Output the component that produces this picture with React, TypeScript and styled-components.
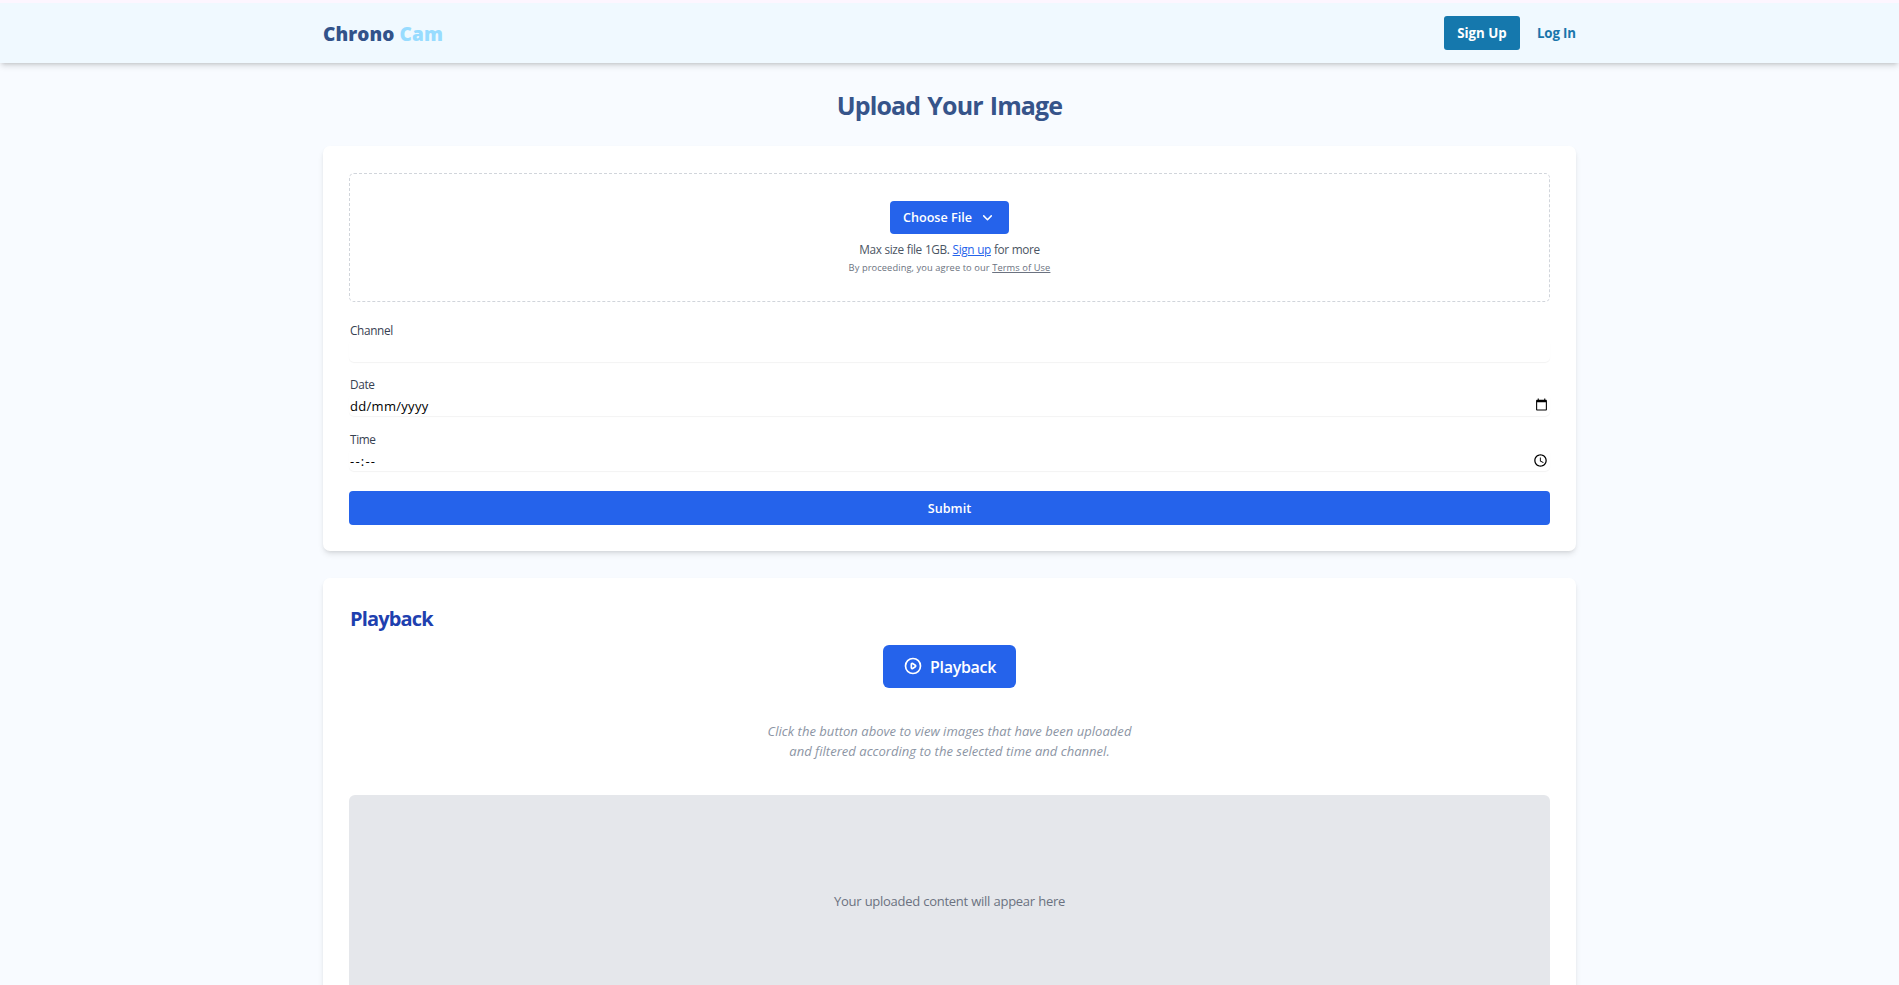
import React from "react";
import styled, { createGlobalStyle } from "styled-components";

const GlobalStyle = createGlobalStyle`
  * { box-sizing: border-box; }
  html, body { margin: 0; padding: 0; }
  body {
    height: 100vh;
    overflow: hidden;
    background: #f8fbff;
    font-family: "Open Sans", "Noto Sans", sans-serif;
  }
  button { font-family: inherit; border: 0; margin: 0; padding: 0; cursor: pointer; }
  p, h1, h2 { margin: 0; }
  a { color: inherit; }
`;

const Header = styled.header`
  position: relative;
  height: 63px;
  border-top: 3px solid #fdf6ff;
  background: #f0f9ff;
  box-shadow: 0 4px 6px -1px rgba(0, 0, 0, 0.13), 0 2px 4px -2px rgba(0, 0, 0, 0.16);
`;

const HeaderInner = styled.div`
  width: 1253px;
  height: 60px;
  margin: 0 auto;
  display: flex;
  align-items: center;
  justify-content: space-between;
`;

const Logo = styled.div`
  font-size: 19px;
  font-weight: 800;
  line-height: 28px;
  letter-spacing: 0.1px;
  padding-top: 2px;
  white-space: nowrap;
  color: #32538a;
`;

const LogoAccent = styled.span`
  color: #98dcff;
`;

const Nav = styled.nav`
  display: flex;
  align-items: center;
  gap: 17px;
  padding-bottom: 1px;
  white-space: nowrap;
`;

const SignUpButton = styled.button`
  width: 76px;
  height: 34px;
  border-radius: 3px;
  background: #1578ad;
  color: #fff;
  font-size: 13.3px;
  font-weight: 700;
`;

const LogInLink = styled.span`
  width: 39px;
  color: #1a76ab;
  font-size: 13.3px;
  font-weight: 700;
  letter-spacing: -0.15px;
`;

const Main = styled.main`
  width: 1253px;
  margin: 0 auto;
  padding-top: 24px;
`;

const Title = styled.h1`
  margin-bottom: 23px;
  color: #36548a;
  font-size: 25px;
  font-weight: 700;
  line-height: 36px;
  letter-spacing: -0.9px;
  word-spacing: 1.6px;
  text-align: center;
`;

const Card = styled.section`
  margin-bottom: 27px;
  padding: 26px;
  border-radius: 7px;
  background: #fff;
  box-shadow: 0 4px 6px -1px rgba(0, 0, 0, 0.1), 0 2px 4px -2px rgba(0, 0, 0, 0.12);
`;

const DropZone = styled.div`
  height: 129px;
  margin-top: 1px;
  padding-top: 27px;
  display: flex;
  flex-direction: column;
  align-items: center;
  border: 1px dashed #d1d5db;
  border-radius: 5px;
`;

const ChooseButton = styled.button`
  width: 119px;
  height: 33px;
  padding-right: 2px;
  display: flex;
  align-items: center;
  justify-content: center;
  gap: 9px;
  border-radius: 4px;
  background: #2563eb;
  color: #fff;
  font-size: 12.6px;
  font-weight: 600;
`;

const SizeHint = styled.p`
  margin-top: 6px;
  color: #4b5563;
  font-size: 11.8px;
  line-height: 18px;
  letter-spacing: -0.38px;
  word-spacing: 0.4px;
  white-space: nowrap;
  a { color: #2563eb; }
`;

const TermsHint = styled.p`
  margin-top: 2px;
  color: #6b7280;
  font-size: 9.3px;
  line-height: 16px;
  letter-spacing: 0.09px;
  white-space: nowrap;
`;

const Field = styled.div<{ $gap: number }>`
  margin-top: ${(p) => p.$gap}px;
`;

const Label = styled.div`
  padding-left: 1px;
  color: #374151;
  font-size: 11.8px;
  font-weight: 500;
  line-height: 18px;
  letter-spacing: -0.35px;
`;

const Input = styled.div<{ $tracking?: number }>`
  height: 23px;
  padding: 2px 2px 0 1px;
  display: flex;
  align-items: center;
  justify-content: space-between;
  border-radius: 5px;
  box-shadow: 0 1px 1px rgba(0, 0, 0, 0.05);
  color: #000;
  font-size: 13px;
  line-height: 20px;
  letter-spacing: ${(p) => p.$tracking ?? 0}px;
`;

const SubmitButton = styled.button`
  display: block;
  width: 100%;
  height: 34px;
  margin-top: 20px;
  border-radius: 4px;
  background: #2563eb;
  color: #fff;
  font-size: 12.6px;
  font-weight: 600;
`;

const SectionTitle = styled.h2`
  padding: 1px 0 0 1px;
  color: #1e40af;
  font-size: 20px;
  font-weight: 700;
  line-height: 28px;
  letter-spacing: -0.85px;
`;

const PlaybackButton = styled.button`
  width: 133px;
  height: 43px;
  margin: 12px auto 0;
  display: flex;
  align-items: center;
  justify-content: center;
  gap: 7px;
  border-radius: 6px;
  background: #2563eb;
  color: #fff;
  font-size: 16px;
  font-weight: 600;
  letter-spacing: -0.3px;
  svg { margin-bottom: 1px; }
`;

const Description = styled.p`
  margin-top: 33px;
  color: #8c95a4;
  font-size: 13px;
  font-style: italic;
  line-height: 20px;
  letter-spacing: 0.03px;
  text-align: center;
`;

const Preview = styled.div`
  height: 212px;
  margin-top: 34px;
  display: flex;
  align-items: center;
  justify-content: center;
  border-radius: 6px;
  background: #e5e7eb;
  color: #6b7280;
  font-size: 13px;
  line-height: 20px;
  letter-spacing: -0.29px;
  word-spacing: 0.4px;
`;

const ChevronIcon = () => (
  <svg width="13" height="13" viewBox="0 0 24 24" fill="none" stroke="currentColor" strokeWidth="2.8" strokeLinecap="round" strokeLinejoin="round">
    <path d="M19 9l-7 7-7-7" />
  </svg>
);

const PlayIcon = () => (
  <svg width="20" height="20" viewBox="0 0 24 24" fill="none" stroke="currentColor" strokeWidth="2" strokeLinecap="round" strokeLinejoin="round">
    <path d="M14.752 11.168l-3.197-2.132A1 1 0 0010 9.87v4.263a1 1 0 001.555.832l3.197-2.132a1 1 0 000-1.664z" />
    <path d="M21 12a9 9 0 11-18 0 9 9 0 0118 0z" />
  </svg>
);

const CalendarSvg = styled.svg`
  margin-bottom: 2px;
`;

const ClockSvg = styled.svg`
  margin-right: 0.5px;
`;

const CalendarIcon = () => (
  <CalendarSvg width="13" height="13" viewBox="0 0 24 24">
    <path d="M20 3h-1V1h-2v2H7V1H5v2H4c-1.1 0-2 .9-2 2v16c0 1.1.9 2 2 2h16c1.1 0 2-.9 2-2V5c0-1.1-.9-2-2-2zm0 18H4V8h16v13z" />
  </CalendarSvg>
);

const ClockIcon = () => (
  <ClockSvg width="15" height="15" viewBox="0 0 24 24">
    <path d="M11.99 2C6.47 2 2 6.48 2 12s4.47 10 9.99 10C17.52 22 22 17.52 22 12S17.52 2 11.99 2zM12 20c-4.42 0-8-3.58-8-8s3.58-8 8-8 8 3.58 8 8-3.58 8-8 8zm.5-13H11v6l5.25 3.15.75-1.23-4.5-2.67z" />
  </ClockSvg>
);

export default function App() {
  return (
    <>
      <GlobalStyle />
      <Header>
        <HeaderInner>
          <Logo>
            Chrono <LogoAccent>Cam</LogoAccent>
          </Logo>
          <Nav>
            <SignUpButton>Sign Up</SignUpButton>
            <LogInLink>Log In</LogInLink>
          </Nav>
        </HeaderInner>
      </Header>
      <Main>
        <Title>Upload Your Image</Title>
        <Card>
          <DropZone>
            <ChooseButton>
              Choose File
              <ChevronIcon />
            </ChooseButton>
            <SizeHint>
              Max size file 1GB. <a href="#signup">Sign up</a> for more
            </SizeHint>
            <TermsHint>
              By proceeding, you agree to our <a href="#terms">Terms of Use</a>
            </TermsHint>
          </DropZone>
          <Field $gap={19}>
            <Label>Channel</Label>
            <Input />
          </Field>
          <Field $gap={13}>
            <Label>Date</Label>
            <Input $tracking={0.3}>
              dd/mm/yyyy
              <CalendarIcon />
            </Input>
          </Field>
          <Field $gap={14}>
            <Label>Time</Label>
            <Input $tracking={1.2}>
              --:--
              <ClockIcon />
            </Input>
          </Field>
          <SubmitButton>Submit</SubmitButton>
        </Card>
        <Card>
          <SectionTitle>Playback</SectionTitle>
          <PlaybackButton>
            <PlayIcon />
            Playback
          </PlaybackButton>
          <Description>
            Click the button above to view images that have been uploaded
            <br />
            and filtered according to the selected time and channel.
          </Description>
          <Preview>Your uploaded content will appear here</Preview>
        </Card>
      </Main>
    </>
  );
}
